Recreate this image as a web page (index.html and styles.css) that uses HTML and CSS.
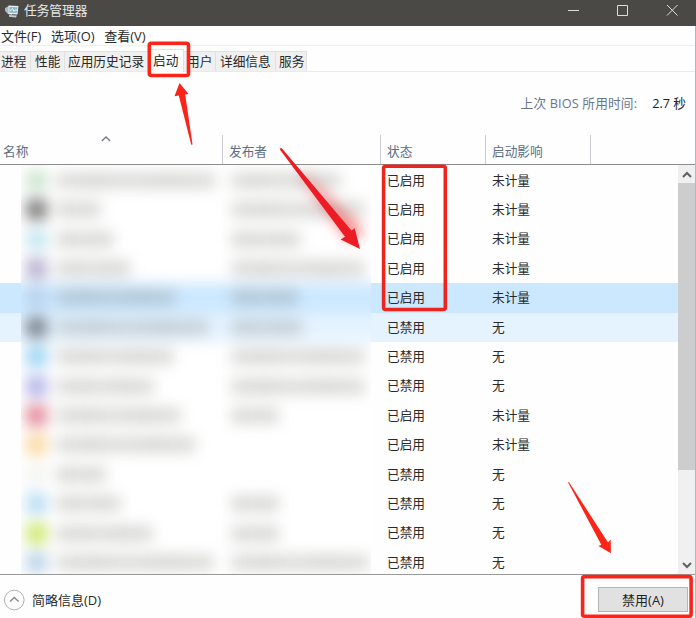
FILE: index.html
```html
<!DOCTYPE html>
<html lang="zh-CN">
<head>
<meta charset="utf-8">
<title>任务管理器</title>
<link rel="stylesheet" href="styles.css">
</head>
<body>
<div class="window">
  <header class="titlebar">
    <svg class="app-icon" width="16" height="16" viewBox="0 0 16 16">
      <path d="M0 5l4-2 3 1v8l-4-1-3-3z" fill="#aebbc0"/>
      <path d="M3.500 2.500l10 .5-1 8.500-9-.5z" fill="#e4eff2"/>
      <path d="M4.500 4l8 .3-.8 5.800-7.400-.4z" fill="#8ab5c8"/>
      <path d="M5 7.500l1.500-.5 1-1.500 1.500 3 1-1.500h2" fill="none" stroke="#e6f7fa"/>
      <path d="M4 12l8 .6-1 2-7-.8z" fill="#c5ced2"/>
    </svg>
    <span class="title">任务管理器</span>
    <svg class="controls" width="130" height="26" viewBox="0 0 130 26" fill="none" stroke="#dedddc">
      <path d="M2 10.500h11M51.500 5.500h10v10h-10zM101 5l10.500 10.500M111.500 5L101 15.500"/>
    </svg>
  </header>
  <nav class="menu"><span>文件(F)</span><span>选项(O)</span><span>查看(V)</span></nav>
  <nav class="tabs">
    <span class="tab t1">进程</span><span class="tab t2">性能</span><span class="tab t3">应用历史记录</span><span class="tab t4 active">启动</span><span class="tab t5">用户</span><span class="tab t6">详细信息</span><span class="tab t7">服务</span>
  </nav>
  <div class="bios"><span class="bios-label">上次 BIOS 所用时间:</span><span class="bios-value">2.7 秒</span></div>
  <div class="columns">
    <div class="col name">名称<svg class="sort" width="10" height="6" viewBox="0 0 10 6" fill="none" stroke="#707985" stroke-width="1.300"><path d="M.8 5L5 1l4.200 4"/></svg></div>
    <div class="col publisher">发布者</div>
    <div class="col status">状态</div>
    <div class="col impact">启动影响</div>
  </div>
  <main class="list">
    <div class="rows" id="rows"></div>
    <div class="scrollbar">
      <svg width="18" height="18" viewBox="0 0 18 18" fill="none" stroke="#606060" stroke-width="2"><path d="M5 12l4-4 4 4"/></svg>
      <div class="thumb"></div>
      <svg class="down" width="18" height="18" viewBox="0 0 18 18" fill="none" stroke="#606060" stroke-width="2"><path d="M5 7l4 4 4-4"/></svg>
    </div>
    <div class="censor"><div class="smear" id="smear"><i class="red-trace"></i></div></div>
  </main>
  <footer class="footer">
    <svg width="22" height="22" viewBox="0 0 22 22" fill="none"><circle cx="11.300" cy="11" r="9.800" stroke="#b0b0b0"/><path d="M7 12.500L11.300 8.500l4.300 4" stroke="#888" stroke-width="1.400"/></svg>
    <span class="brief">简略信息(D)</span>
    <button class="disable">禁用(A)</button>
  </footer>
  <svg class="marks" width="696" height="618" viewBox="0 0 696 618">
    <g fill="none" stroke="#fb2419" stroke-width="3.600">
      <rect x="149.300" y="43.300" width="39.200" height="32.200" rx="2"/>
      <rect x="383.600" y="166.300" width="61.700" height="143.200" rx="2" stroke="#ee241f"/>
      <rect x="582.600" y="576.600" width="108.500" height="39.600" rx="2"/>
    </g>
    <path fill="#fb2419" d="M179.500 83L188.500 94l-3.300.5 7.300 49.700q-.6 1.200-1.400 0L178.800 95.600l-4.300.7z"/>
    <path fill="#ed1c24" d="M280 148.500q1-1 2 0L351.500 230.500l3.200-2.200L360 249l-19.300-9.500 4.300-2.700L280.200 150z"/>
    <path fill="#fb2419" d="M568 482.200q.5-.6 1.200.2L608 542.500l2.700-3 .2 13.700L598.500 546l2.800-1.200z"/>
  </svg>
</div>
<script src="app.js"></script>
</body>
</html>
```
FILE: styles.css
```css
* { box-sizing: border-box; }
body { margin: 0; overflow: hidden; background: #fff; }
.window {
  position: relative; width: 696px; height: 618px; overflow: hidden;
  display: flex; flex-direction: column; background: #fefefe; color: #2a2a2a;
  font: 12.7px/18px "Open Sans", "Noto Sans CJK SC", sans-serif;
  white-space: nowrap;
}
.window::after { content: ""; position: absolute; right: 0; top: 26px; width: 1px; height: 592px; background: #b5b8bb; }
.titlebar { flex: none; height: 26px; display: flex; background: #4b4946; color: #e8e7e6; }
.app-icon { margin: 3px 0 0 5px; }
.title { margin: 1px 0 0 3px; }
.controls { flex: none; margin: 0 0 0 auto; width: 130px; }
.menu { flex: none; height: 20px; display: flex; gap: 9.5px; padding: 1px 1px 0; border-bottom: 1px solid #eee; font-size: 13px; }
.tabs { flex: none; height: 26px; display: flex; padding-top: 5px; border-bottom: 1px solid #eaeaea; }
.tab { background: #f0f0f0; border: 1px solid #e1e1e1; border-width: 1px 1px 0 0; padding-left: 4px; line-height: 19px; height: 20px; }
.t1 { width: 31px; padding-left: 1px; }
.t2 { width: 34px; }
.t3 { width: 85px; padding-left: 3px; }
.t4 { width: 34px; padding-left: 2px; }
.t5 { width: 32px; padding-left: 3px; }
.t6 { width: 60px; }
.t7 { width: 31px; padding-left: 3px; }
.tab.active { background: #fff; margin-top: -2px; height: 23px; padding-left: 3px; line-height: 20px; }
.bios { flex: none; height: 63px; display: flex; justify-content: flex-end; padding: 22px 10px 0 0; color: #68768b; }
.bios-label { letter-spacing: .15px; }
.bios-value { margin-left: 15px; color: #222; }
.columns { flex: none; height: 30px; display: flex; border-bottom: 1px solid #8c8c8c; color: #5e6d84; }
.col { border-right: 1px solid #c9cdd1; padding: 7px 0 0 6px; }
.name { width: 223px; padding-left: 3px; display: flex; }
.sort { margin: -6px 0 0 73px; }
.publisher { width: 158px; }
.status { width: 105px; }
.impact { width: 105px; }
.list { flex: none; position: relative; height: 410px; display: flex; border-bottom: 1px solid #999; overflow: hidden; }
.rows { width: 678px; padding-top: .6px; }
.row { height: 29.42px; display: flex; padding-left: 387px; line-height: 28px; }
.row span { width: 105px; }
.selected { background: #cce8ff; }
.hover { background: #e5f3ff; }
.scrollbar { width: 17px; height: 409px; display: flex; flex-direction: column; background: #f0f0f0; }
.scrollbar svg { flex: none; display: block; }
.thumb { height: 287px; background: #cdcdcd; }
.scrollbar .down { margin-top: auto; }
.censor { position: absolute; left: 21px; top: 0; width: 350px; height: 410px; overflow: hidden; background: #fff; border-bottom: 1px solid #ddd; }
.smear { position: relative; margin: 0 -30px; padding-top: .6px; filter: blur(7px); }
.smear-row { height: 29.42px; padding-left: 35px; display: flex; align-items: center; }
.swatch { width: 21px; height: 21px; flex: none; margin-right: 9px; }
.bar { height: 17px; background: linear-gradient(90deg, #77776f, #5c5c56 25%, #777770 45%, #5c5c56 70%, #77776f); opacity: .23; flex: none; }
.name-slot { width: 175px; flex: none; }
.red-trace { position: absolute; left: 332px; top: -4px; width: 18px; height: 84px; background: #f00; opacity: .5; transform: rotate(-36deg); clip-path: polygon(0 0, 20% 0, 100% 100%, 0 100%); }
.footer { flex: none; height: 43px; display: flex; padding: 14px 0 0 3px; font-size: 13px; }
.brief { margin: 2px 0 0 7px; }
.disable { margin: -2px 8px 0 auto; width: 90px; height: 25px; padding: 0; border: 1px solid #b5b5b5; background: #e1e1e1; color: #222; font: inherit; }
.marks { position: absolute; left: 0; top: 0; z-index: 1; pointer-events: none; }
```
FILE: app.js
```js
// on: enabled state; icon: swatch colour; n/p: widths of the obscured name and publisher
const items = [
  [1, '#cfe6d3', 160, 110], [1, '#858585', 45, 134], [1, '#c8e8f2', 58, 70],
  [1, '#bbb5d2', 75, 134], [1, '#b9d3ef', 120, 68], [0, '#7f8b96', 153, 72],
  [0, '#a0d6f5', 118, 134], [0, '#b8b8ea', 98, 134], [1, '#e58f9f', 125, 48],
  [1, '#fadba6', 140, 0], [0, '#f5f5f3', 50, 0], [0, '#bbdff5', 65, 48],
  [0, '#d0ea78', 97, 48], [0, '#bfd5ea', 158, 138]
];
const rows = document.getElementById('rows');
const smear = document.getElementById('smear');
items.forEach(([on, icon, n, p], i) => {
  const state = i === 4 ? ' selected' : i === 5 ? ' hover' : '';
  rows.insertAdjacentHTML('beforeend',
    `<div class="row${state}"><span>${on ? '已启用' : '已禁用'}</span><span>${on ? '未计量' : '无'}</span></div>`);
  smear.insertAdjacentHTML('beforeend',
    `<div class="smear-row${state}"><i class="swatch" style="background:${icon}"></i><div class="name-slot"><div class="bar" style="width:${n}px"></div></div><div class="bar" style="width:${p}px"></div></div>`);
});
```
